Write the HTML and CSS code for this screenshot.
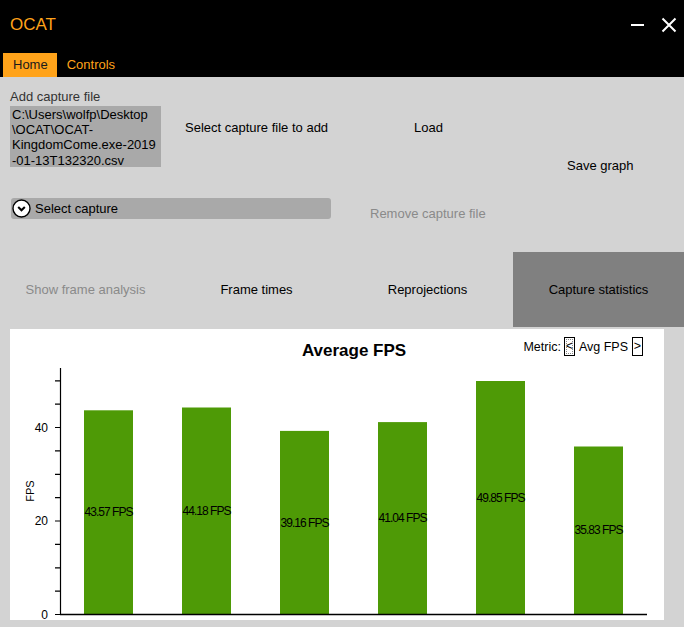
FILE: index.html
```html
<!DOCTYPE html>
<html lang="en">
<head>
<meta charset="utf-8">
<title>OCAT</title>
<link rel="stylesheet" href="styles.css">
</head>
<body>
<div class="window">
  <header class="titlebar">
    <div class="title-row">
      <span class="app-title">OCAT</span>
      <div class="win-controls">
        <svg class="win-min" width="14" height="14" viewBox="0 0 14 14"><line x1="0" y1="7" x2="13" y2="7" stroke="#fff" stroke-width="2"/></svg>
        <svg class="win-close" width="16" height="16" viewBox="0 0 16 16"><path d="M1.5 1.5 L14.5 14.5 M14.5 1.5 L1.5 14.5" stroke="#fff" stroke-width="2" fill="none"/></svg>
      </div>
    </div>
    <nav class="menu">
      <span class="menu-tab active">Home</span>
      <span class="menu-tab">Controls</span>
    </nav>
  </header>

  <main class="content">
    <section class="capture-grid">
      <div class="add-label">Add capture file</div>
      <div class="path-box">C:\Users\wolfp\Desktop<br>\OCAT\OCAT-<br>KingdomCome.exe-2019<br>-01-13T132320.csv</div>
      <div class="btn-select">Select capture file to add</div>
      <div class="btn-load">Load</div>
      <div class="btn-save">Save graph</div>
      <div class="combo">
        <svg class="combo-icon" width="19" height="19" viewBox="0 0 19 19"><circle cx="9.5" cy="9.5" r="8.5" fill="#fff" stroke="#000" stroke-width="1.4"/><path d="M6.2 8 L9.5 11.3 L12.8 8" fill="none" stroke="#000" stroke-width="2"/></svg>
        <span>Select capture</span>
      </div>
      <div class="btn-remove">Remove capture file</div>
    </section>

    <nav class="view-tabs">
      <div class="view-tab disabled">Show frame analysis</div>
      <div class="view-tab">Frame times</div>
      <div class="view-tab">Reprojections</div>
      <div class="view-tab selected">Capture statistics</div>
    </nav>

    <section class="chart">
      <div class="chart-header">
        <div class="chart-title">Average FPS</div>
        <div class="metric">
          <span>Metric:</span>
          <span class="metric-btn focused">&lt;</span>
          <span class="metric-name">Avg FPS</span>
          <span class="metric-btn">&gt;</span>
        </div>
      </div>
      <svg class="plot" width="654" height="255" viewBox="0 0 654 255">
        <g class="bars" fill="#4e9a06">
          <rect x="74" y="45.3" width="49" height="203.7"/>
          <rect x="172" y="42.5" width="49" height="206.5"/>
          <rect x="270" y="65.9" width="49" height="183.1"/>
          <rect x="368" y="57.1" width="49" height="191.9"/>
          <rect x="466" y="16" width="49" height="233"/>
          <rect x="564" y="81.5" width="49" height="167.5"/>
        </g>
        <g class="bar-labels" font-size="12" text-anchor="middle" dominant-baseline="central">
          <text x="99" y="147" textLength="49">43.57 FPS</text>
          <text x="197" y="146" textLength="49">44.18 FPS</text>
          <text x="295" y="157.5" textLength="49">39.16 FPS</text>
          <text x="393" y="153" textLength="49">41.04 FPS</text>
          <text x="491" y="132.5" textLength="49">49.85 FPS</text>
          <text x="589" y="165" textLength="49">35.83 FPS</text>
        </g>
        <g class="axes" stroke="#000" fill="none">
          <line x1="50.5" y1="3" x2="50.5" y2="249.5" stroke-width="1.2"/>
          <line x1="50" y1="249.5" x2="637" y2="249.5" stroke-width="1.6"/>
          <path stroke-width="1.2" d="M45 249.5H50 M45 226.1H50 M45 202.8H50 M45 179.4H50 M45 156H50 M45 132.6H50 M45 109.3H50 M45 85.9H50 M45 62.5H50 M45 39.1H50 M45 15.8H50"/>
        </g>
        <g class="tick-labels" font-size="12" text-anchor="end" dominant-baseline="central">
          <text x="38" y="249.5">0</text>
          <text x="38" y="156">20</text>
          <text x="38" y="62.5">40</text>
        </g>
        <text class="axis-title" x="20" y="126" font-size="11" text-anchor="middle" dominant-baseline="central" transform="rotate(-90 20 126)">FPS</text>
      </svg>
    </section>
  </main>
</div>
</body>
</html>
```

FILE: styles.css
```css
* {
  box-sizing: border-box;
}

html, body {
  margin: 0;
  padding: 0;
}

body {
  width: 684px;
  height: 627px;
  overflow: hidden;
  background: #d3d3d3;
  font-family: "Liberation Sans", Arial, sans-serif;
  font-size: 13px;
  color: #000;
}

.window {
  display: flex;
  flex-direction: column;
  height: 627px;
}

/* ---------- title bar ---------- */
.titlebar {
  background: #000;
  height: 77px;
  display: flex;
  flex-direction: column;
}

.title-row {
  height: 53px;
  display: flex;
  align-items: center;
  justify-content: space-between;
  padding: 0 7px 3px 10px;
}

.app-title {
  color: #ffa31a;
  font-size: 17px;
}

.win-controls {
  display: flex;
  align-items: center;
  gap: 16px;
}

.win-min,
.win-close {
  display: block;
}

.menu {
  height: 24px;
  display: flex;
  padding-left: 3px;
}

.menu-tab {
  line-height: 24px;
  padding: 0 10px;
  color: #ffa31a;
}

.menu-tab.active {
  background: #ffa31a;
  color: #1a1a1a;
  padding: 0 9px 0 10px;
}

/* ---------- content ---------- */
.content {
  flex: 1;
  display: flex;
  flex-direction: column;
}

.capture-grid {
  display: grid;
  grid-template-columns: 151px 199px 140px 1fr;
  grid-template-rows: 20px 42px 34px 16px 24px;
  margin: 9px 0 0 10px;
}

.add-label {
  grid-row: 1;
  grid-column: 1 / span 2;
  align-self: center;
  color: #333;
  line-height: 16px;
  margin-top: 2px;
}

.path-box {
  grid-row: 2 / span 2;
  grid-column: 1;
  align-self: start;
  height: 61px;
  background: #a9a9a9;
  padding: 1px 0 0 2px;
  line-height: 15.2px;
  white-space: nowrap;
  overflow: hidden;
}

.btn-select {
  grid-row: 2;
  grid-column: 2;
  align-self: center;
  padding-left: 24px;
}

.btn-load {
  grid-row: 2;
  grid-column: 3;
  align-self: center;
  padding-left: 54px;
}

.btn-save {
  grid-row: 3;
  grid-column: 4;
  align-self: center;
  padding-left: 67px;
}

.combo {
  grid-row: 5;
  grid-column: 1 / span 2;
  align-self: start;
  width: 320px;
  height: 21px;
  margin-left: 1px;
  background: #a9a9a9;
  border-radius: 3px;
  display: flex;
  align-items: center;
  gap: 4px;
  padding-left: 1px;
}

.combo-icon {
  display: block;
}

.btn-remove {
  grid-row: 5;
  grid-column: 3 / span 2;
  align-self: end;
  line-height: 16px;
  padding-left: 10px;
  color: #8a8a8a;
}

/* ---------- view tabs ---------- */
.view-tabs {
  margin-top: 30px;
  height: 75px;
  display: grid;
  grid-template-columns: repeat(4, 1fr);
}

.view-tab {
  display: flex;
  align-items: center;
  justify-content: center;
  padding-bottom: 1px;
}

.view-tab.disabled {
  color: #8a8a8a;
}

.view-tab.selected {
  background: #808080;
}

/* ---------- chart ---------- */
.chart {
  margin: 2px 0 0 10px;
  width: 654px;
  height: 291px;
  background: #fff;
  display: flex;
  flex-direction: column;
}

.chart-header {
  height: 36px;
  display: grid;
  padding: 0 21px 0 55px;
}

.chart-title,
.metric {
  grid-area: 1 / 1;
}

.chart-title {
  justify-self: center;
  align-self: start;
  margin-top: 12px;
  line-height: 20px;
  font-size: 17px;
  font-weight: bold;
}

.metric {
  justify-self: end;
  align-self: start;
  margin-top: 8px;
  height: 19px;
  display: flex;
  align-items: center;
  font-size: 12.5px;
}

.metric-btn {
  width: 11px;
  height: 19px;
  border: 1px solid #000;
  display: flex;
  align-items: center;
  justify-content: center;
  line-height: 1;
  margin-left: 3px;
}

.metric-btn.focused {
  outline: 1px dotted #888;
  outline-offset: -3px;
}

.metric-name {
  margin: 0 1px 0 4px;
}

.plot {
  display: block;
  font-family: "Liberation Sans", Arial, sans-serif;
}
```
